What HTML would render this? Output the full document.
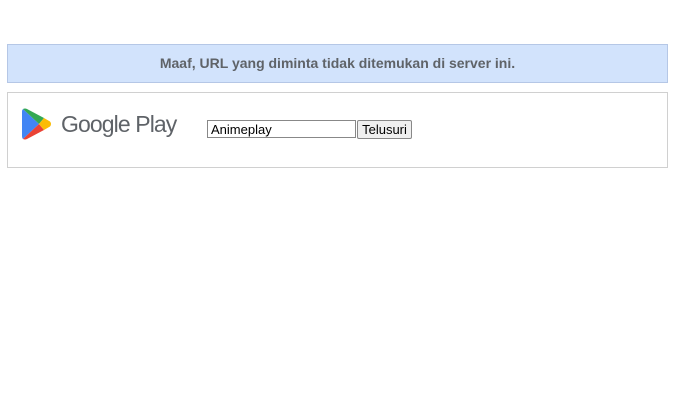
<!DOCTYPE html><html><head><style>
body{margin:0;background:#fff;font-family:"Liberation Sans",Arial,sans-serif;}
.b{position:absolute;left:7px;top:44px;width:659px;height:37px;background:#d2e3fc;border:1px solid #b5c7e6;text-align:center;line-height:37px;font-weight:bold;font-size:14px;color:#5f6368}
.c{position:absolute;left:7px;top:92px;width:659px;height:74px;border:1px solid #d0d0d0}
.gp{position:absolute;left:61px;top:111px;font-size:23px;color:#5f6368;letter-spacing:-0.9px}
input{position:absolute;left:207px;top:120px;width:149px;height:18px;box-sizing:border-box;border:1px solid #888;font:13px "Liberation Sans",sans-serif;padding:0 3px;margin:0}
button{position:absolute;left:357px;top:120px;width:55px;height:19px;box-sizing:border-box;border:1px solid #888;background:#efefef;font:13px "Liberation Sans",sans-serif;padding:0;margin:0;border-radius:2px}
</style></head><body>
<div class="b">Maaf, URL yang diminta tidak ditemukan di server ini.</div>
<div class="c"></div>
<svg style="position:absolute;left:22px;top:108px" width="30" height="32" viewBox="0 0 30 32">
<path d="M1 1 L17 16 L1 31 Q0 30 0 28 L0 4 Q0 2 1 1Z" fill="#4285f4"/>
<path d="M1 1 Q3 0 5 1 L22 10 L17 16Z" fill="#34a853"/>
<path d="M1 31 L17 16 L22 22 L5 31 Q3 32 1 31Z" fill="#ea4335"/>
<path d="M22 10 L28 13.5 Q30 16 28 18.5 L22 22 L17 16Z" fill="#fbbc04"/>
</svg>
<div class="gp">Google Play</div>
<input value="Animeplay"><button>Telusuri</button>
</body></html>
